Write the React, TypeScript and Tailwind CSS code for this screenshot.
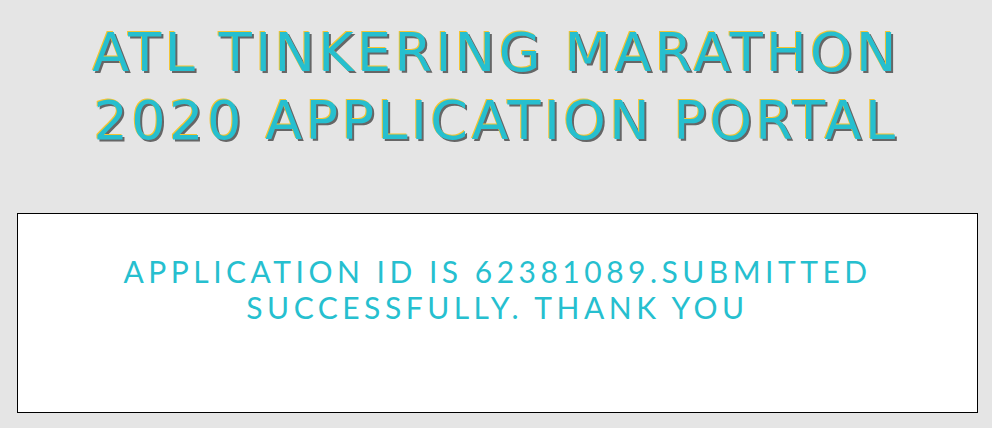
export default function App() {
  return (
    <div className="min-h-[428px] w-full bg-[#e5e5e5] pt-[19px]">
      <h1
        className="text-center text-[54px] leading-[68px] tracking-[3.4px] text-[#26bfcf] font-normal"
        style={{
          fontFamily: '"DejaVu Sans", Verdana, sans-serif',
          textShadow: '-1px -1px 0 #f4c430, 2px 2px 0 #666666',
        }}
      >
        ATL TINKERING MARATHON
        <br />
        2020 APPLICATION PORTAL
      </h1>
      <div className="ml-[17px] mt-[58px] h-[200px] w-[961px] border border-black bg-white pt-[39px]">
        <p
          className="text-center text-[30px] leading-[36px] tracking-[4.5px] text-[#26bfcf]"
          style={{ fontFamily: 'Lato, sans-serif' }}
        >
          APPLICATION ID IS 62381089.SUBMITTED
          <br />
          SUCCESSFULLY. THANK YOU
        </p>
      </div>
    </div>
  );
}
